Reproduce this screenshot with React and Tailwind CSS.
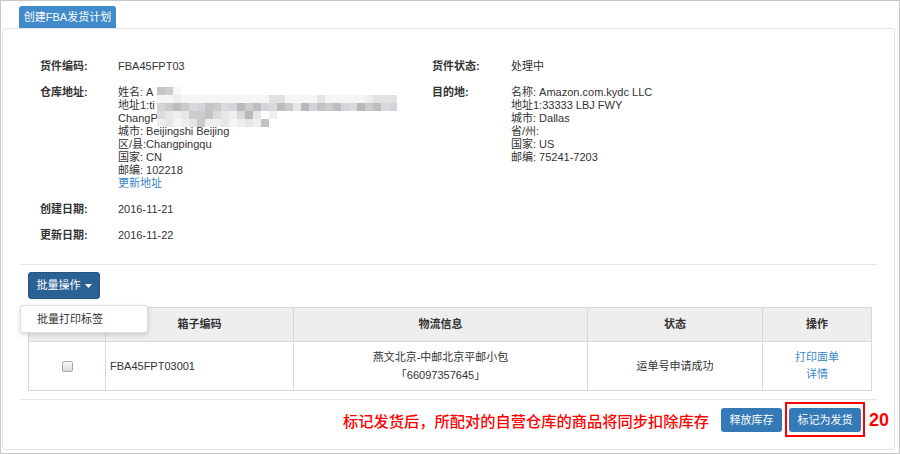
import React from "react";

const FONT = "font-['Liberation_Sans','Noto_Sans_CJK_SC',sans-serif]";

const P = {
  a: "bg-[#c6c2c5]",
  b: "bg-[#cfcdcf]",
  c: "bg-[#f3f5f9]",
  d: "bg-[#f5f5f5]",
  e: "bg-[#e1e1e1]",
  f: "bg-[#bfbbbf]",
  g: "bg-[#cbcbcb]",
  h: "bg-[#d3d4da]",
  i: "bg-[#b9b7b9]",
  j: "bg-[#dadada]",
  k: "bg-[#e6e6e6]",
  l: "bg-[#c3c3c5]",
  m: "bg-[#eeeeee]",
  ".": "bg-transparent",
};

const MOSAIC = [
  "abc...........................",
  "ddmdddddddddddeeddddkdddddmeee",
  "hgfgjhlgjhigfhjfgkihlgfhjigfjh",
  "jkmkggljkmjikom...............",
  "mkdmkgmmkdmkml................",
];

function Mosaic() {
  return (
    <div className="flex flex-col">
      {MOSAIC.map((row, r) => (
        <div key={r} className="flex">
          {row.split("").map((ch, k) => (
            <div key={k} className={"w-[8px] h-[8px] " + P[ch]} />
          ))}
        </div>
      ))}
    </div>
  );
}

function Row({ label, children, labelW = "w-[78px]" }) {
  return (
    <div className="flex">
      <div className={labelW + " shrink-0 font-bold"}>{label}</div>
      <div>{children}</div>
    </div>
  );
}

export default function App() {
  return (
    <div className={`w-[900px] h-[454px] bg-white border border-[#c8c8c8] relative overflow-hidden text-[11px] leading-[13px] text-[#333] ${FONT}`}>
      <div className="pl-[18px] pt-[5px]">
        <div className="w-[97px] h-[22px] bg-[#428bca] text-white rounded-t-[3px] flex items-center justify-center text-[11px]">
          创建FBA发货计划
        </div>
      </div>
      <div className="ml-[1px] mr-[4px] h-[422px] border border-[#e2e2e2] rounded-[4px] px-[17px] pt-[31px]">
        {/* info */}
        <div className="flex pl-[20px]">
          <div className="w-[392px] flex flex-col gap-[13px]">
            <Row label="货件编码:">FBA45FPT03</Row>
            <Row label="仓库地址:">
              <div className="relative">
                <div>姓名: A</div>
                <div>地址1:ti</div>
                <div>ChangP</div>
                <div>城市: Beijingshi Beijing</div>
                <div>区/县:Changpingqu</div>
                <div>国家: CN</div>
                <div>邮编: 102218</div>
                <div className="text-[#3a87c8]">更新地址</div>
                <div className="absolute left-[39px] top-[1px]">
                  <Mosaic />
                </div>
              </div>
            </Row>
            <Row label="创建日期:">2016-11-21</Row>
            <Row label="更新日期:">2016-11-22</Row>
          </div>
          <div className="flex flex-col gap-[13px]">
            <Row label="货件状态:" labelW="w-[79px]">处理中</Row>
            <Row label="目的地:" labelW="w-[79px]">
              <div>名称: Amazon.com.kydc LLC</div>
              <div>地址1:33333 LBJ FWY</div>
              <div>城市: Dallas</div>
              <div>省/州:</div>
              <div>国家: US</div>
              <div>邮编: 75241-7203</div>
            </Row>
          </div>
        </div>

        <div className="mt-[22px] border-t border-[#e5e5e5]" />

        {/* actions */}
        <div className="px-[8px] pt-[7px] relative">
          <button className="h-[27px] w-[72px] bg-[#2b6296] text-white rounded-[3px] border border-[#245582] flex items-center justify-center gap-[4px] text-[11px]">
            批量操作
            <svg width="7" height="4" viewBox="0 0 7 4"><path d="M0 0h7L3.5 4z" fill="#fff" /></svg>
          </button>
          <table className="mt-[8px] w-[843px] border-collapse table-fixed border border-[#d2d2d2]">
            <colgroup>
              <col className="w-[77px]" />
              <col className="w-[188px]" />
              <col className="w-[294px]" />
              <col className="w-[175px]" />
              <col className="w-[109px]" />
            </colgroup>
            <thead>
              <tr className="h-[34px] bg-[#eeeeee]">
                <th className="border border-[#d8d8d8]"></th>
                <th className="border border-[#d8d8d8] font-bold">箱子编码</th>
                <th className="border border-[#d8d8d8] font-bold">物流信息</th>
                <th className="border border-[#d8d8d8] font-bold">状态</th>
                <th className="border border-[#d8d8d8] font-bold">操作</th>
              </tr>
            </thead>
            <tbody>
              <tr className="h-[49px]">
                <td className="border border-[#d8d8d8] text-center">
                  <div className="mx-auto w-[11px] h-[11px] border border-[#a9a9a9] rounded-[2px] bg-gradient-to-b from-[#fafafa] to-[#d9d9d9]" />
                </td>
                <td className="border border-[#d8d8d8] px-[4px]">FBA45FPT03001</td>
                <td className="border border-[#d8d8d8] text-center leading-[18px]">
                  <div>燕文北京-中邮北京平邮小包</div>
                  <div>「66097357645」</div>
                </td>
                <td className="border border-[#d8d8d8] text-center">运单号申请成功</td>
                <td className="border border-[#d8d8d8] text-center text-[#3a87c8] leading-[17px]">
                  <div>打印面单</div>
                  <div>详情</div>
                </td>
              </tr>
            </tbody>
          </table>
          {/* dropdown menu */}
          <div className="absolute left-0 top-[40px] w-[128px] h-[28px] bg-white border border-[#dcdcdc] rounded-[3px] shadow-[0_2px_5px_rgba(0,0,0,0.15)] flex items-center pl-[16px]">
            批量打印标签
          </div>
        </div>

        <div className="mt-[8px] border-t border-[#e5e5e5]" />

        <div className="flex justify-end items-center pr-[16px] pt-[8px]">
          <span className="text-[15.25px] leading-[20px] text-[#ff0000] font-['Noto_Sans_CJK_SC',sans-serif] font-medium mr-[12px]">
            标记发货后，所配对的自营仓库的商品将同步扣除库存
          </span>
          <button className="h-[24px] w-[61px] bg-[#337ab7] text-white rounded-[3px] text-[11px] mr-[7px]">释放库存</button>
          <div className="relative">
            <button className="h-[24px] w-[72px] bg-[#337ab7] text-white rounded-[3px] text-[11px] block">标记为发货</button>
            <div className="absolute -left-[4px] -top-[6px] w-[80px] h-[35px] border-2 border-[#ff0000]" />
            <div className="absolute left-[80px] top-[2px] text-[#ff0000] font-bold text-[18px] leading-[20px] font-['Liberation_Sans',sans-serif]">20</div>
          </div>
        </div>
      </div>
    </div>
  );
}
